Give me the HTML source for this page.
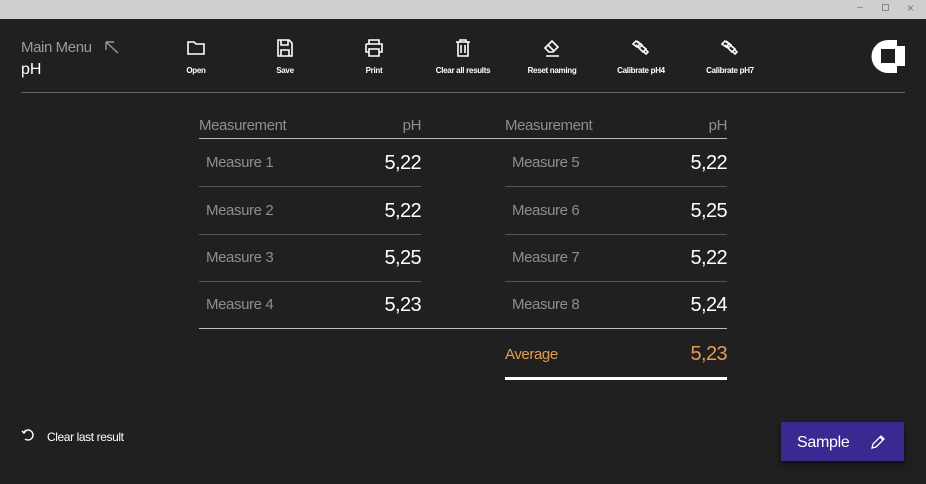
<!DOCTYPE html>
<html><head><style>
*{margin:0;padding:0;box-sizing:border-box}
body{width:926px;height:484px;background:#202020;font-family:"Liberation Sans",sans-serif;position:relative;overflow:hidden;color:#fff}
.tb{position:absolute;left:0;top:0;width:926px;height:19px;background:#cfcfcf}
.a{position:absolute;white-space:nowrap}
.tool{position:absolute;top:39px;width:90px;margin-left:-45px;text-align:center;font-size:8px;letter-spacing:-0.3px;font-weight:bold}
.tool svg{display:block;margin:0 auto 9px}
.hl{position:absolute;height:1px;background:#777}
.lbl{color:#8e8e8e;font-size:15px;letter-spacing:-0.4px}
.val{font-size:20px;letter-spacing:-0.6px;text-align:right}
</style></head><body>
<div class="tb">
<div class="a" style="left:857px;top:2px;color:#777;font-size:10px">–</div>
<div class="a" style="left:882px;top:4px;width:7px;height:7px;border:1px solid #888"></div>
<div class="a" style="left:907px;top:1px;color:#777;font-size:12px">×</div>
</div>
<div class="a" style="left:21px;top:39px;font-size:15px;color:#9a9a9a;letter-spacing:-0.4px">Main Menu</div>
<svg class="a" style="left:104px;top:40px" width="16" height="14" viewBox="0 0 16 14"><path d="M2 2L14 13M2 2v8M2 2h8" stroke="#9a9a9a" stroke-width="1.4" fill="none"/></svg>
<div class="a" style="left:21px;top:61px;font-size:16px">pH</div>

<div class="tool" style="left:196px"><svg width="20" height="18" viewBox="0 0 20 18"><path d="M2 3h6l2 2h8v10H2z" stroke="#fff" stroke-width="1.6" fill="none"/></svg>Open</div>
<div class="tool" style="left:285px"><svg width="20" height="18" viewBox="0 0 20 18"><path d="M3 1h11l3 3v13H3z M6 1v5h7V1 M6 17v-6h8v6" stroke="#fff" stroke-width="1.6" fill="none"/></svg>Save</div>
<div class="tool" style="left:374px"><svg width="20" height="18" viewBox="0 0 20 18"><path d="M5 5V1h10v4 M2 5h16v8h-3 M5 13H2V5 M5 10h10v7H5z" stroke="#fff" stroke-width="1.6" fill="none"/></svg>Print</div>
<div class="tool" style="left:463px"><svg width="20" height="18" viewBox="0 0 20 18"><path d="M3 3h14 M7 3V1h6v2 M5 3v14h10V3 M8 6v8 M12 6v8" stroke="#fff" stroke-width="1.6" fill="none"/></svg>Clear all results</div>
<div class="tool" style="left:552px"><svg width="20" height="18" viewBox="0 0 20 18"><path d="M3 9l7-7 6 6-5 5H7z M6 6l6 6 M4 17h13" stroke="#fff" stroke-width="1.6" fill="none"/></svg>Reset naming</div>
<div class="tool" style="left:641px"><svg width="20" height="18" viewBox="0 0 20 18"><path d="M2 5l3-3 4 3-3 3z M6 2l5 4-3 3-3-3 M10 6l5 4-3 3-4-4 M14 10l3 3-2 2-3-3" stroke="#fff" stroke-width="1.6" fill="none"/></svg>Calibrate pH4</div>
<div class="tool" style="left:730px"><svg width="20" height="18" viewBox="0 0 20 18"><path d="M2 5l3-3 4 3-3 3z M6 2l5 4-3 3-3-3 M10 6l5 4-3 3-4-4 M14 10l3 3-2 2-3-3" stroke="#fff" stroke-width="1.6" fill="none"/></svg>Calibrate pH7</div>

<svg class="a" style="left:870px;top:39px" width="36" height="36" viewBox="0 0 36 36"><path d="M18 1A16.5 16.5 0 0 0 18 34H27V27H35V7H27V1Z" fill="#fff"/><rect x="11" y="10" width="14" height="14" fill="#202020"/></svg>

<div class="hl" style="left:21px;top:92px;width:884px;background:#666"></div>

<div class="a lbl" style="left:199px;top:117px">Measurement</div>
<div class="a lbl" style="left:380px;top:117px;width:41px;text-align:right">pH</div>
<div class="a lbl" style="left:505px;top:117px">Measurement</div>
<div class="a lbl" style="left:686px;top:117px;width:41px;text-align:right">pH</div>
<div class="hl" style="left:199px;top:138px;width:528px;background:#bbb"></div>

<div class="a lbl" style="left:206px;top:154px">Measure 1</div><div class="a val" style="left:341px;top:152px;width:80px">5,22</div>
<div class="a lbl" style="left:206px;top:202px">Measure 2</div><div class="a val" style="left:341px;top:200px;width:80px">5,22</div>
<div class="a lbl" style="left:206px;top:249px">Measure 3</div><div class="a val" style="left:341px;top:247px;width:80px">5,25</div>
<div class="a lbl" style="left:206px;top:296px">Measure 4</div><div class="a val" style="left:341px;top:294px;width:80px">5,23</div>
<div class="a lbl" style="left:512px;top:154px">Measure 5</div><div class="a val" style="left:647px;top:152px;width:80px">5,22</div>
<div class="a lbl" style="left:512px;top:202px">Measure 6</div><div class="a val" style="left:647px;top:200px;width:80px">5,25</div>
<div class="a lbl" style="left:512px;top:249px">Measure 7</div><div class="a val" style="left:647px;top:247px;width:80px">5,22</div>
<div class="a lbl" style="left:512px;top:296px">Measure 8</div><div class="a val" style="left:647px;top:294px;width:80px">5,24</div>
<div class="hl" style="left:199px;top:186px;width:222px;background:#555"></div>
<div class="hl" style="left:199px;top:234px;width:222px;background:#555"></div>
<div class="hl" style="left:199px;top:281px;width:222px;background:#555"></div>
<div class="hl" style="left:505px;top:186px;width:222px;background:#555"></div>
<div class="hl" style="left:505px;top:234px;width:222px;background:#555"></div>
<div class="hl" style="left:505px;top:281px;width:222px;background:#555"></div>
<div class="hl" style="left:199px;top:328px;width:528px;background:#bbb"></div>

<div class="a" style="left:505px;top:346px;font-size:15px;color:#e39c55;letter-spacing:-0.4px">Average</div>
<div class="a val" style="left:647px;top:343px;width:80px;color:#e39c55">5,23</div>
<div class="a" style="left:505px;top:377px;width:222px;height:3px;background:#fff"></div>

<svg class="a" style="left:21px;top:428px" width="14" height="14" viewBox="0 0 14 14"><path d="M4 11A5 5 0 1 0 3 4 M1 3l2 2 2-2" stroke="#fff" stroke-width="1.4" fill="none"/></svg>
<div class="a" style="left:47px;top:430px;font-size:12px;letter-spacing:-0.4px">Clear last result</div>

<div class="a" style="left:781px;top:422px;width:123px;height:39px;background:#3a2990;box-shadow:0 3px 6px rgba(0,0,0,.6)">
<div class="a" style="left:16px;top:12px;font-size:16px;letter-spacing:-0.3px">Sample</div>
<svg class="a" style="left:88px;top:11px" width="18" height="18" viewBox="0 0 18 18"><path d="M3 15l1-4 8-8 3 3-8 8z M11 4l3 3" stroke="#fff" stroke-width="1.3" fill="none"/></svg>
</div>
</body></html>
